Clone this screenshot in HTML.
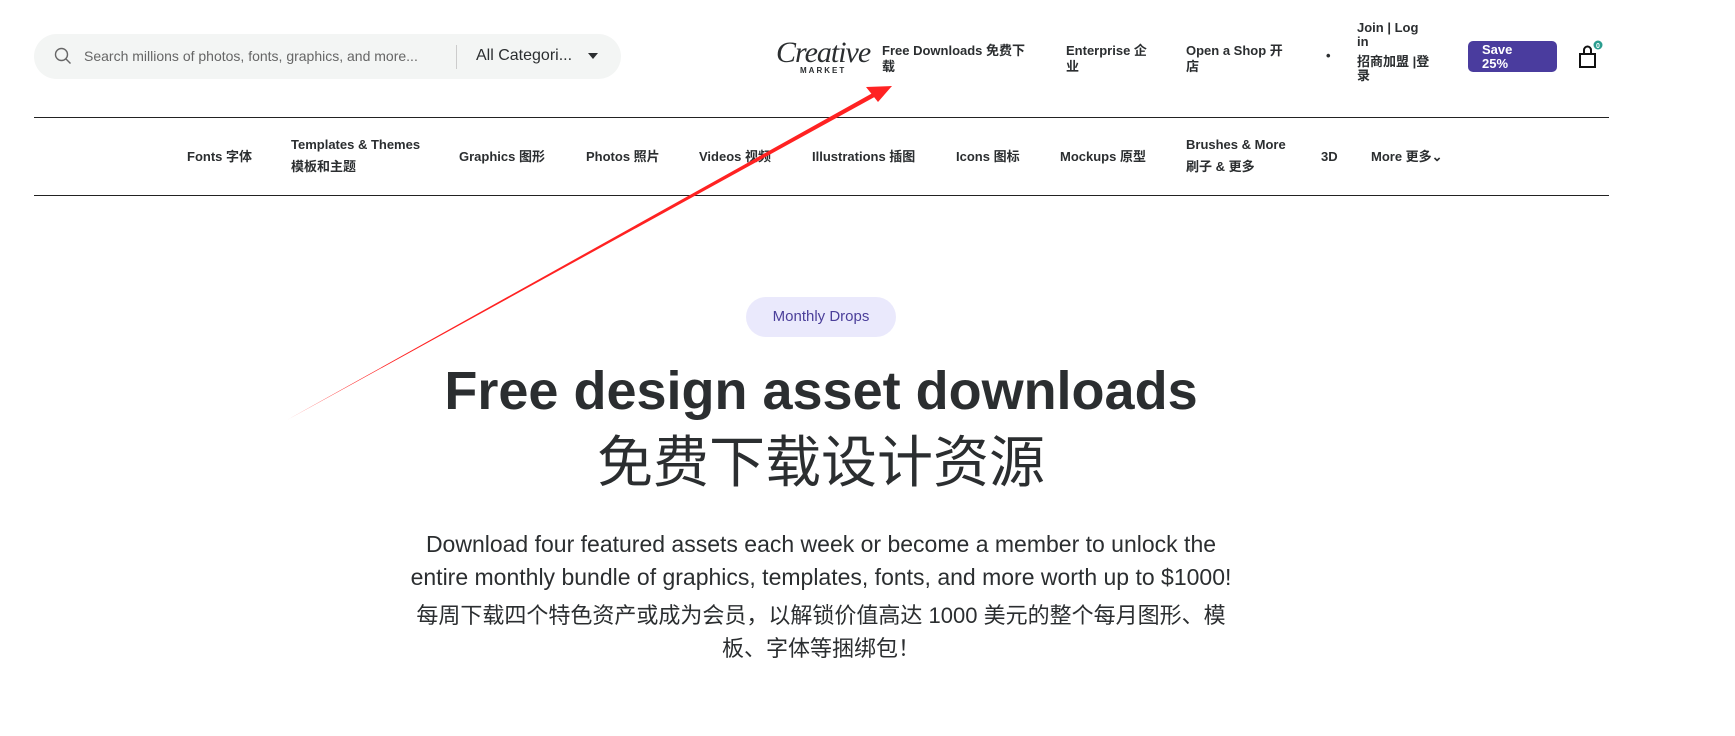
<!DOCTYPE html>
<html><head><meta charset="utf-8">
<style>
body{margin:0;width:1735px;height:736px;background:#fff;position:relative;overflow:hidden;font-family:"Liberation Sans","Noto Sans CJK SC",sans-serif;color:#2b2e30}
.a{position:absolute;white-space:nowrap}
.n{font-size:13px;font-weight:bold;color:#2b2e30;line-height:16px}
.search{left:34px;top:34px;width:587px;height:45px;border-radius:23px;background:#f3f5f4}
.line{position:absolute;left:34px;width:1575px;height:1px;background:#222}
.c{left:0;width:1642px;text-align:center}
</style></head><body>
<div class="a search"></div>
<svg class="a" style="left:54px;top:47px" width="18" height="18" viewBox="0 0 18 18"><circle cx="7.5" cy="7.5" r="6" fill="none" stroke="#666" stroke-width="1.4"/><line x1="12" y1="12" x2="16.5" y2="16.5" stroke="#666" stroke-width="1.4"/></svg>
<div class="a" style="left:84px;top:48px;font-size:14px;color:#666">Search millions of photos, fonts, graphics, and more...</div>
<div class="a" style="left:456px;top:45px;width:1px;height:24px;background:#ccc"></div>
<div class="a" style="left:476px;top:47px;font-size:16px;color:#2b2e30">All Categori...</div>
<svg class="a" style="left:588px;top:53px" width="10" height="6"><path d="M0 0H10L5 6Z" fill="#2b2e30"/></svg>

<div class="a" style="left:776px;top:36px;font-family:'Liberation Serif',serif;font-style:italic;font-size:30px;color:#2b2e30;letter-spacing:-1px">Creative</div>
<div class="a" style="left:800px;top:66px;font-size:8px;letter-spacing:2px;font-weight:bold">MARKET</div>

<div class="a n" style="left:882px;top:43px">Free Downloads 免费下<br>载</div>
<div class="a n" style="left:1066px;top:43px">Enterprise 企<br>业</div>
<div class="a n" style="left:1186px;top:43px">Open a Shop 开<br>店</div>
<div class="a n" style="left:1326px;top:48px">•</div>
<div class="a n" style="left:1357px;top:21px;line-height:14px">Join | Log<br>in<br><span style="display:inline-block;margin-top:6px">招商加盟 |登<br>录</span></div>
<div class="a" style="left:1468px;top:41px;width:89px;height:31px;border-radius:5px;background:#4a3c9e;color:#fff;font-size:13px;font-weight:bold;line-height:14px;box-sizing:border-box;padding:2px 0 0 14px">Save<br>25%</div>
<svg class="a" style="left:1577px;top:40px" width="28" height="30" viewBox="0 0 28 30"><path d="M3 14h15v13H3z" fill="none" stroke="#111" stroke-width="2"/><path d="M7 14V10a3.5 3.5 0 0 1 7 0v4" fill="none" stroke="#111" stroke-width="2"/><circle cx="21" cy="5" r="4.5" fill="#2a9d8f"/><text x="21" y="8" font-size="7" fill="#fff" text-anchor="middle" font-family="Liberation Sans" font-weight="bold">0</text></svg>

<div class="line" style="top:117px"></div>
<div class="line" style="top:195px"></div>
<div class="a n" style="left:187px;top:149px">Fonts 字体</div>
<div class="a n" style="left:291px;top:134px;line-height:22px">Templates &amp; Themes<br>模板和主题</div>
<div class="a n" style="left:459px;top:149px">Graphics 图形</div>
<div class="a n" style="left:586px;top:149px">Photos 照片</div>
<div class="a n" style="left:699px;top:149px">Videos 视频</div>
<div class="a n" style="left:812px;top:149px">Illustrations 插图</div>
<div class="a n" style="left:956px;top:149px">Icons 图标</div>
<div class="a n" style="left:1060px;top:149px">Mockups 原型</div>
<div class="a n" style="left:1186px;top:134px;line-height:22px">Brushes &amp; More<br>刷子 &amp; 更多</div>
<div class="a n" style="left:1321px;top:149px">3D</div>
<div class="a n" style="left:1371px;top:149px">More 更多⌄</div>

<div class="a" style="left:746px;top:297px;width:150px;height:40px;border-radius:20px;background:#eae9fc;color:#4b3f9a;font-size:15px;text-align:center;line-height:40px">Monthly Drops</div>
<div class="a c" style="top:358px;font-size:54px;font-weight:bold;line-height:66px;color:#2b2e30">Free design asset downloads</div>
<div class="a c" style="top:428px;font-size:56px;line-height:70px;color:#2b2e30">免费下载设计资源</div>
<div class="a c" style="top:528px;font-size:23px;line-height:33px;color:#2b2e30">Download four featured assets each week or become a member to unlock the<br>entire monthly bundle of graphics, templates, fonts, and more worth up to $1000!</div>
<div class="a c" style="top:599px;font-size:22px;line-height:33px;color:#2b2e30">每周下载四个特色资产或成为会员，以解锁价值高达 1000 美元的整个每月图形、模<br>板、字体等捆绑包！</div>

<svg class="a" style="left:0;top:0" width="1735" height="736"><path d="M287 420 L878 90 L880 94 Z" fill="#f22"/><path d="M892 86 L866 87 L878 102 Z" fill="#f22"/></svg>
</body></html>
